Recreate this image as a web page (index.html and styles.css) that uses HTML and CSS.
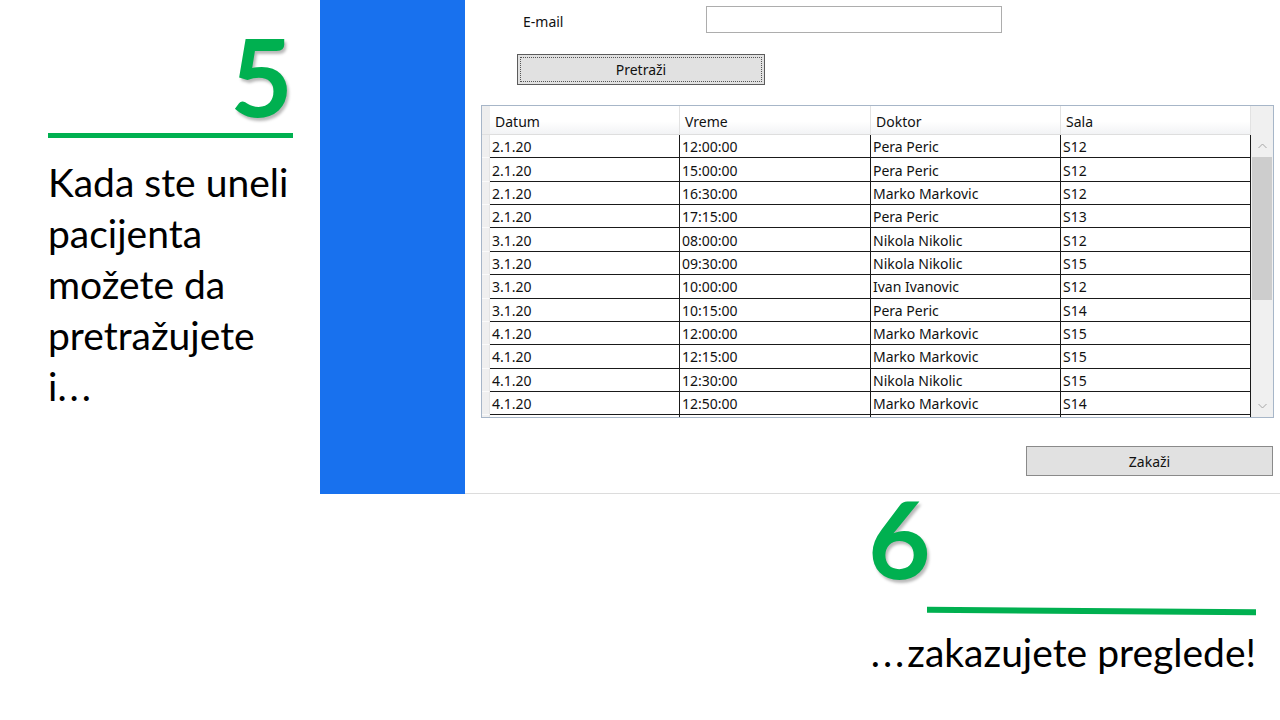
FILE: index.html
```html
<!DOCTYPE html>
<html lang="sr">
<head>
<meta charset="utf-8">
<title>Zakazivanje</title>
<link rel="stylesheet" href="styles.css">
</head>
<body>
<div class="slide">
  <div class="top">
    <aside class="intro">
      <div class="num">5</div>
      <div class="rule"></div>
      <p class="desc">Kada ste uneli<br>pacijenta<br>možete da<br>pretražujete<br>i<span class="dots">...</span></p>
    </aside>
    <div class="blue"></div>
    <section class="app">
      <div class="field-row">
        <label class="lbl">E-mail</label>
        <div class="input"></div>
      </div>
      <div class="btn-row">
        <button class="btn btn-search"><span class="focus">Pretraži</span></button>
      </div>
      <div class="grid">
        <div class="ghead">
          <div class="hcorner"></div>
          <div class="hcell">Datum</div>
          <div class="hcell">Vreme</div>
          <div class="hcell">Doktor</div>
          <div class="hcell">Sala</div>
          <div class="hcorner-r"></div>
        </div>
        <div class="gbody">
          <div class="rows">
            <div class="row"><div class="rh"></div><div class="cell">2.1.20</div><div class="cell">12:00:00</div><div class="cell">Pera Peric</div><div class="cell">S12</div></div>
            <div class="row"><div class="rh"></div><div class="cell">2.1.20</div><div class="cell">15:00:00</div><div class="cell">Pera Peric</div><div class="cell">S12</div></div>
            <div class="row"><div class="rh"></div><div class="cell">2.1.20</div><div class="cell">16:30:00</div><div class="cell">Marko Markovic</div><div class="cell">S12</div></div>
            <div class="row"><div class="rh"></div><div class="cell">2.1.20</div><div class="cell">17:15:00</div><div class="cell">Pera Peric</div><div class="cell">S13</div></div>
            <div class="row"><div class="rh"></div><div class="cell">3.1.20</div><div class="cell">08:00:00</div><div class="cell">Nikola Nikolic</div><div class="cell">S12</div></div>
            <div class="row"><div class="rh"></div><div class="cell">3.1.20</div><div class="cell">09:30:00</div><div class="cell">Nikola Nikolic</div><div class="cell">S15</div></div>
            <div class="row"><div class="rh"></div><div class="cell">3.1.20</div><div class="cell">10:00:00</div><div class="cell">Ivan Ivanovic</div><div class="cell">S12</div></div>
            <div class="row"><div class="rh"></div><div class="cell">3.1.20</div><div class="cell">10:15:00</div><div class="cell">Pera Peric</div><div class="cell">S14</div></div>
            <div class="row"><div class="rh"></div><div class="cell">4.1.20</div><div class="cell">12:00:00</div><div class="cell">Marko Markovic</div><div class="cell">S15</div></div>
            <div class="row"><div class="rh"></div><div class="cell">4.1.20</div><div class="cell">12:15:00</div><div class="cell">Marko Markovic</div><div class="cell">S15</div></div>
            <div class="row"><div class="rh"></div><div class="cell">4.1.20</div><div class="cell">12:30:00</div><div class="cell">Nikola Nikolic</div><div class="cell">S15</div></div>
            <div class="row"><div class="rh"></div><div class="cell">4.1.20</div><div class="cell">12:50:00</div><div class="cell">Marko Markovic</div><div class="cell">S14</div></div>
            <div class="row"><div class="rh"></div><div class="cell"></div><div class="cell"></div><div class="cell"></div><div class="cell"></div></div>
          </div>
          <div class="scrollbar">
            <div class="sb-arrow">
              <svg width="9" height="6" viewBox="0 0 9 6"><path d="M0.5 5 L4.5 1 L8.5 5" fill="none" stroke="#a6a6a6" stroke-width="1"/></svg>
            </div>
            <div class="sb-thumb"></div>
            <div class="sb-space"></div>
            <div class="sb-arrow">
              <svg width="9" height="6" viewBox="0 0 9 6"><path d="M0.5 1 L4.5 5 L8.5 1" fill="none" stroke="#a6a6a6" stroke-width="1"/></svg>
            </div>
          </div>
        </div>
      </div>
      <div class="actions">
        <button class="btn btn-book">Zakaži</button>
      </div>
    </section>
  </div>
  <div class="bottom">
    <div class="outro">
      <div class="num num6">6</div>
      <div class="rule rule6"></div>
      <p class="desc end"><span class="dots">...</span>zakazujete preglede!</p>
    </div>
  </div>
</div>
</body>
</html>
```
FILE: styles.css
```css
* { box-sizing: border-box; }
html, body { margin: 0; padding: 0; background: #fff; }
body { width: 1280px; height: 720px; overflow: hidden; font-family: "Lato", "Noto Sans", sans-serif; color: #000; }

.slide { width: 1280px; height: 720px; display: flex; flex-direction: column; }
.top { display: flex; height: 494px; }

.intro { width: 320px; padding: 32px 27px 0 48px; }
.num {
  font-family: "Lato", sans-serif;
  font-weight: 700;
  font-size: 108px;
  line-height: 86px;
  height: 86px;
  color: #00b050;
  text-align: right;
  text-shadow: 2px 3px 3px rgba(0,0,0,0.28);
}
.rule { height: 5px; background: #00b050; margin-top: 15px; }
.desc {
  margin: 19px 0 0;
  font-size: 39px;
  line-height: 51px;
  white-space: nowrap;
  color: #000;
}
.dots { letter-spacing: 3px; }

.blue { width: 145px; background: #1871ee; }

.app {
  width: 815px;
  height: 494px;
  border-bottom: 1px solid #dcdcdc;
  font-family: "Noto Sans", "Open Sans", sans-serif;
  font-size: 14px;
  color: #111;
  display: flex;
  flex-direction: column;
}
.field-row { display: flex; align-items: center; margin-top: 6px; padding-left: 58px; height: 27px; }
.lbl { width: 183px; padding-top: 4px; }
.input { width: 296px; height: 27px; border: 1px solid #adadad; background: #fff; }

.btn-row { margin-top: 21px; padding-left: 52px; }
.btn {
  font-family: "Noto Sans", "Open Sans", sans-serif;
  font-size: 14px;
  color: #111;
  background: #e1e1e1;
  border: 1px solid #8f8f8f;
  padding: 0;
  display: flex;
  align-items: center;
  justify-content: center;
}
.btn-search { width: 248px; height: 31px; border-color: #5c5c5c; position: relative; }
.btn-search::after {
  content: "";
  position: absolute;
  inset: 2px;
  border: 1px dotted #555;
}
.focus { line-height: 1; padding-top: 1px; }

.grid {
  margin: 20px 0 0 16px;
  width: 793px;
  height: 313px;
  border: 1px solid #a7b6c8;
  overflow: hidden;
  background: #fff;
}
.ghead {
  display: grid;
  grid-template-columns: 8px 190px 191px 190px 190px 22px;
  height: 29px;
}
.hcorner { background: #eeeeee; border-bottom: 1px solid #e0e0e0; }
.hcorner-r { background: #f0f0f0; }
.hcell {
  background: linear-gradient(to bottom, #ffffff 0%, #ffffff 55%, #f2f3f5 100%);
  border-right: 1px solid #e2e2e2;
  border-bottom: 1px solid #dedede;
  padding-left: 5px;
  display: flex;
  align-items: center;
  padding-top: 2px;
  color: #111;
}

.gbody { display: flex; height: 282px; overflow: hidden; }
.rows { width: 769px; }
.row {
  display: grid;
  grid-template-columns: 8px 190px 191px 190px 190px;
  height: 23.36px;
}
.rh { background: #efefef; border-right: 1px solid #e4e4e4; border-bottom: 1px solid #fafafa; }
.cell {
  border-right: 1px solid #1a1a1a;
  border-bottom: 1px solid #1a1a1a;
  padding-left: 2px;
  padding-top: 1px;
  display: flex;
  align-items: center;
  white-space: nowrap;
  color: #111;
}

.scrollbar { width: 22px; background: #f0f0f0; display: flex; flex-direction: column; }
.sb-arrow { height: 22px; display: flex; align-items: center; justify-content: center; }
.sb-thumb { height: 143px; margin: 0 1px; background: #cdcdcd; }
.sb-space { flex: 1; }

.actions { margin-top: 28px; padding-left: 561px; }
.btn-book { width: 247px; height: 30px; border-color: #8a8a8a; }

.bottom { flex: 1; display: flex; justify-content: flex-end; padding-right: 24px; }
.outro { width: 388px; display: flex; flex-direction: column; }
.num6 { text-align: left; height: 86px; }
.rule6 { margin: 28px 0 0 59px; height: 6px; transform: rotate(0.4deg); }
.end { margin-top: 13px; text-align: right; }
```
